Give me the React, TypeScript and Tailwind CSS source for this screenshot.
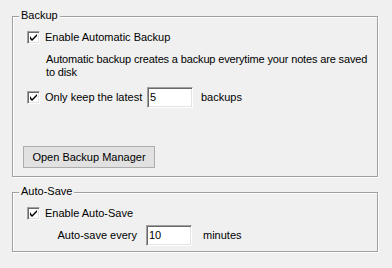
import React from "react";

function CheckBox() {
  return (
    <span className="relative flex h-[13px] w-[13px] shrink-0 items-center justify-center border border-t-[#a0a0a0] border-l-[#a0a0a0] border-b-white border-r-white bg-white shadow-[inset_1px_1px_0_#696969,inset_-1px_-1px_0_#e3e3e3]">
      <svg width="7" height="7" viewBox="0 0 7 7" className="block">
        <path d="M0 2 L0 5 L2 7 L7 2 L7 0 L2 5 Z" fill="#000" />
      </svg>
    </span>
  );
}

function TextBox({ value }: { value: string }) {
  return (
    <div className="flex h-[21px] w-[46px] shrink-0 items-center border border-t-[#a0a0a0] border-l-[#a0a0a0] border-b-white border-r-white bg-white pl-[2px] shadow-[inset_1px_1px_0_#696969,inset_-1px_-1px_0_#e3e3e3]">
      {value}
    </div>
  );
}

function GroupBox({
  title,
  className,
  children,
}: {
  title: string;
  className: string;
  children: React.ReactNode;
}) {
  return (
    <div
      className={`relative border border-[#a0a0a0] shadow-[inset_1px_1px_0_#fff,1px_1px_0_#fff] ${className}`}
    >
      <span className="absolute -top-[8px] left-[6px] bg-[#f0f0f0] px-[2px] leading-[13px]">
        {title}
      </span>
      {children}
    </div>
  );
}

export default function App() {
  return (
    <div
      className="flex h-[268px] w-[392px] flex-col bg-[#f0f0f0] pl-[12px] pt-[16px] text-[11px] leading-[13px] text-black"
      style={{ fontFamily: '"Liberation Sans", Arial, sans-serif' }}
    >
      {/* Backup */}
      <GroupBox title="Backup" className="flex h-[161px] w-[366px] flex-col">
        <div className="ml-[14px] mt-[14px] flex items-center gap-[5px]">
          <CheckBox />
          <span>Enable Automatic Backup</span>
        </div>
        <p className="ml-[33px] mt-[9px] whitespace-nowrap leading-[13px] tracking-[-0.15px]">
          Automatic backup creates a backup everytime your notes are saved
          <br />
          to disk
        </p>
        <div className="mt-[8px] flex items-center">
          <div className="ml-[14px] flex w-[120px] items-center gap-[5px]">
            <CheckBox />
            <span>Only keep the latest</span>
          </div>
          <TextBox value="5" />
          <span className="ml-[8px]">backups</span>
        </div>
        <button className="ml-[10px] mt-[38px] h-[22px] w-[132px] border border-[#adadad] bg-[#e1e1e1] text-center leading-[20px]">
          Open Backup Manager
        </button>
      </GroupBox>

      {/* Auto-Save */}
      <GroupBox title="Auto-Save" className="mt-[15px] flex h-[60px] w-[366px] flex-col">
        <div className="ml-[14px] mt-[14px] flex items-center gap-[5px]">
          <CheckBox />
          <span>Enable Auto-Save</span>
        </div>
        <div className="mt-[5px] flex items-center">
          <span className="w-[133px] pr-[9px] text-right">Auto-save every</span>
          <TextBox value="10" />
          <span className="ml-[11px]">minutes</span>
        </div>
      </GroupBox>
    </div>
  );
}
